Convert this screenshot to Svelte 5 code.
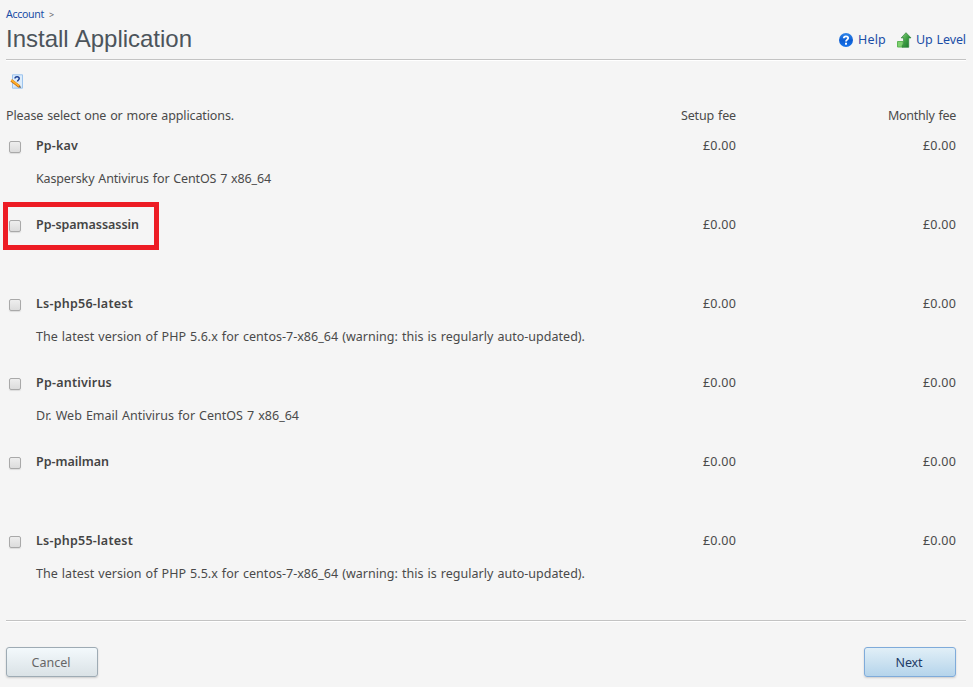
<script>
  const apps = [
    { name: 'Pp-kav', w: 42, desc: 'Kaspersky Antivirus for CentOS 7 x86_64', dw: 235 },
    { name: 'Pp-spamassassin', w: 103, desc: '', dw: 0, marked: true },
    { name: 'Ls-php56-latest', w: 97, desc: 'The latest version of PHP 5.6.x for centos-7-x86_64 (warning: this is regularly auto-updated).', dw: 549 },
    { name: 'Pp-antivirus', w: 76, desc: 'Dr. Web Email Antivirus for CentOS 7 x86_64', dw: 263 },
    { name: 'Pp-mailman', w: 73, desc: '', dw: 0 },
    { name: 'Ls-php55-latest', w: 97, desc: 'The latest version of PHP 5.5.x for centos-7-x86_64 (warning: this is regularly auto-updated).', dw: 549 }
  ];

  // Tracks a label out (or in) so that it takes the given width.
  function fit(node, width) {
    const n = node.textContent.length;
    const natural = node.getBoundingClientRect().width;
    if (!n || !width) return;
    const gap = (width - natural) / n;
    node.style.letterSpacing = `${gap}px`;
  }
</script>

<div class="page">
  <nav class="crumbs"><a href="#account"><span use:fit={38}>Account</span></a><span class="sep">&gt;</span></nav>
  <header>
    <h1><span use:fit={186}>Install Application</span></h1>
    <div class="links">
      <a href="#help">
        <svg width="16" height="16" viewBox="0 0 16 16">
          <defs>
            <linearGradient id="blue" x1="0" y1="0" x2="0" y2="1">
              <stop offset="0" stop-color="#2f86ea" /><stop offset=".55" stop-color="#0c5dd3" /><stop offset="1" stop-color="#1976ee" />
            </linearGradient>
          </defs>
          <circle cx="8" cy="8" r="7" fill="url(#blue)" />
          <path d="M5.8 6.3C5.8 3.6 10.2 3.7 10.2 6.1C10.2 7.7 8 7.6 8 9.6" fill="none" stroke="#fff" stroke-width="1.8" />
          <rect x="7" y="10.7" width="2" height="2" fill="#fff" />
        </svg>
        <span use:fit={28}>Help</span>
      </a>
      <a href="#up" class="up">
        <svg width="16" height="16" viewBox="0 0 16 16">
          <defs>
            <linearGradient id="green" x1="0" y1="0" x2="1" y2="1">
              <stop offset="0" stop-color="#8fd480" /><stop offset=".5" stop-color="#3c9e42" /><stop offset="1" stop-color="#16702b" />
            </linearGradient>
          </defs>
          <path d="M1.5 9.5h5.5v5.5h-5.5z" fill="#7fd070" stroke="#5cb554" />
          <path d="M10 .7L15 5.9H12.7V15.3H6.3V13.5L7.6 12V5.9H5.2z" fill="url(#green)" stroke="#2c8138" stroke-width=".7" />
        </svg>
        <span use:fit={50}>Up Level</span>
      </a>
    </div>
  </header>

  <div class="tools">
    <svg width="14" height="16" viewBox="0 0 14 16">
      <path d="M2.5 .8H12.5V14.2H2.5z" fill="#dcecfb" stroke="#9cc4ee" />
      <path d="M4 13.2H11.7" stroke="#b8d6f4" />
      <path d="M5 4.6C5 2 9.2 2 9.2 4.6C9.2 6 7.5 6 7.5 7.6" fill="none" stroke="#1b3f94" stroke-width="1.5" />
      <path d="M1.3 6.4L9.4 12.6" stroke="#c9700f" stroke-width="2.8" />
      <path d="M1.3 6L9.2 12" stroke="#ffb02c" stroke-width="1.6" />
      <path d="M8.7 13.3L11 13.7L10 11.8z" fill="#4d3d2d" />
    </svg>
  </div>

  <div class="row head">
    <span class="main"><span use:fit={228}>Please select one or more applications.</span></span>
    <span class="fee"><span use:fit={55}>Setup fee</span></span>
    <span class="fee"><span use:fit={68}>Monthly fee</span></span>
  </div>

  {#each apps as app}
    <div class="row app">
      <label class="main">
        {#if app.marked}<i class="mark"></i>{/if}
        <input type="checkbox" />
        <span class="info">
          <b><span use:fit={app.w}>{app.name}</span></b>
          <span class="desc"><span use:fit={app.dw}>{app.desc}</span></span>
        </span>
      </label>
      <span class="fee"><span use:fit={33}>£0.00</span></span>
      <span class="fee"><span use:fit={33}>£0.00</span></span>
    </div>
  {/each}

  <footer>
    <button class="cancel"><span use:fit={39}>Cancel</span></button>
    <button class="next"><span use:fit={27}>Next</span></button>
  </footer>
</div>

<style>
  :global(body) { background: #f5f5f5; }
  .page {
    box-sizing: border-box;
    height: 687px;
    padding: 6px 7px 0 6px;
    overflow: hidden;
    background: #f5f5f5;
    color: #4a4a4a;
    font: 12.5px/18px "Trebuchet MS", "Noto Sans", sans-serif;
    word-spacing: 0.8px;
    white-space: nowrap;
  }
  a { color: #1a4da6; text-decoration: none; }
  .crumbs { display: flex; height: 17px; font-size: 10.6px; line-height: 17px; }
  .sep { margin-left: 5px; font-size: 9px; color: #666; line-height: 18px; }
  header {
    box-sizing: border-box;
    display: flex;
    justify-content: space-between;
    height: 37px;
    border-bottom: 1px solid #c3c3c3;
    box-shadow: 0 1px #fff;
  }
  h1 { margin: 0; font: 24px/32px "Liberation Sans", Arial, sans-serif; color: #4c545b; }
  .links { display: flex; padding-top: 8px; }
  .links a { display: flex; gap: 4px; height: 18px; }
  .links svg { margin-top: 1px; }
  .links .up { margin-left: 10px; }
  .tools { height: 47px; padding: 14px 0 0 4px; box-sizing: border-box; }
  .tools svg { display: block; }
  .row { display: flex; }
  .main { width: 510px; }
  .fee { width: 220px; text-align: right; }
  .head { height: 30px; }
  .app { height: 79px; }
  label { position: relative; display: flex; }
  .mark {
    position: absolute;
    left: -3px;
    top: -14px;
    width: 146px;
    height: 38px;
    border: 5px solid #ed1c24;
  }
  input {
    appearance: none;
    box-sizing: border-box;
    flex: none;
    width: 12px;
    height: 12px;
    margin: 4px 15px 0 3px;
    border: 1px solid #a9a9a9;
    border-radius: 2px;
    background: linear-gradient(#eee, #dcdcdc);
    box-shadow: 0 1px 1px #ddd;
  }
  .info { display: flex; flex-direction: column; gap: 15px; }
  b { font-weight: 600; color: #444; }
  footer {
    display: flex;
    justify-content: space-between;
    margin-top: 9px;
    padding: 26px 10px 0 0;
    border-top: 1px solid #c3c3c3;
    box-shadow: inset 0 1px #fff;
  }
  button {
    box-sizing: border-box;
    width: 92px;
    height: 30px;
    padding: 1px 2px 0 0;
    border: 1px solid;
    border-radius: 3px;
    font: inherit;
    box-shadow: 0 1px 2px #ccc;
  }
  .cancel { border-color: #9eabb4; background: linear-gradient(#f3f9fc, #dae2e6); color: #666; }
  .next { border-color: #7fabda; background: linear-gradient(#e1eff7, #b5d4eb); color: #1e3b66; }
</style>
